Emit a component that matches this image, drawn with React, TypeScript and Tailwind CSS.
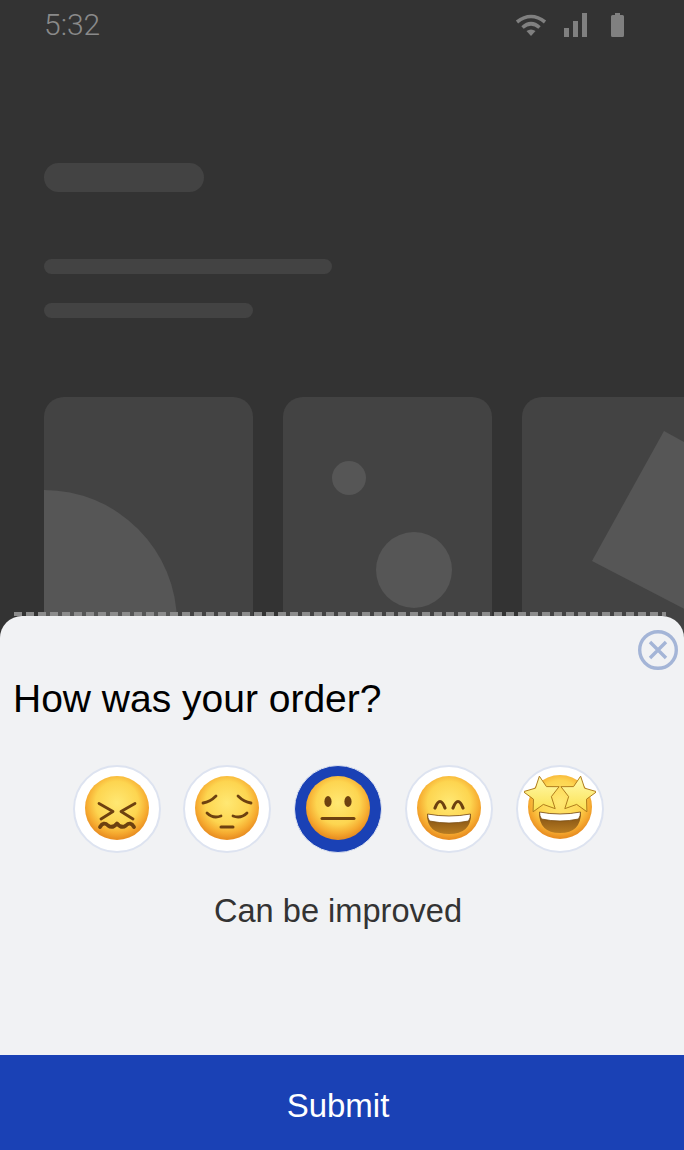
import React from "react";

const starPoints = (cx: number, cy: number, R: number, r: number, rot = 0) => {
  const pts: string[] = [];
  for (let i = 0; i < 10; i++) {
    const a = ((-90 + rot + i * 36) * Math.PI) / 180;
    const rad = i % 2 === 0 ? R : r;
    pts.push(`${(cx + rad * Math.cos(a)).toFixed(2)},${(cy + rad * Math.sin(a)).toFixed(2)}`);
  }
  return pts.join(" ");
};

const Defs = ({ id }: { id: string }) => (
  <defs>
    <radialGradient id={`face-${id}`} cx="50%" cy="42%" r="56%">
      <stop offset="0%" stopColor="#ffe873" />
      <stop offset="60%" stopColor="#fdd550" />
      <stop offset="85%" stopColor="#f6ab30" />
      <stop offset="100%" stopColor="#e98f22" />
    </radialGradient>
    <linearGradient id={`star-${id}`} x1="0" y1="0" x2="0" y2="1">
      <stop offset="0%" stopColor="#fffbb0" />
      <stop offset="100%" stopColor="#fbe04e" />
    </linearGradient>
    <linearGradient id={`mouth-${id}`} x1="0" y1="0" x2="0" y2="1">
      <stop offset="0%" stopColor="#7a4a10" />
      <stop offset="100%" stopColor="#b87c22" />
    </linearGradient>
  </defs>
);

const Brown = "#6d4110";

const Face = ({ id, children }: { id: string; children?: React.ReactNode }) => (
  <svg viewBox="0 0 64 64" className="w-[64px] h-[64px] block -mt-[2px]">
    <Defs id={id} />
    <circle cx="32" cy="32" r="32" fill={`url(#face-${id})`} />
    {children}
  </svg>
);

const Confounded = () => (
  <Face id="a">
    <g fill="none" stroke={Brown} strokeLinecap="round" strokeLinejoin="round">
      <path d="M14 27.5 L28 35.5 L16 43" strokeWidth="2.8" />
      <path d="M50 27.5 L36 35.5 L48 43" strokeWidth="2.8" />
      <path d="M15 51 Q18.5 45 23 49.5 Q27.5 53 32 47.5 Q36.5 53 41 49.5 Q45.5 45 49 51" strokeWidth="3.8" />
    </g>
  </Face>
);

const Pensive = () => (
  <Face id="b">
    <g fill="none" stroke={Brown} strokeWidth="2.8" strokeLinecap="round">
      <path d="M8 27 Q15 26 21 20" />
      <path d="M56 27 Q49 26 43 20" />
      <path d="M12 37 Q18 43 26 40" />
      <path d="M52 37 Q46 43 38 40" />
      <path d="M26 51 L38 51" strokeWidth="3" />
    </g>
  </Face>
);

const Neutral = () => (
  <Face id="c">
    <ellipse cx="22" cy="25.5" rx="3.6" ry="5.4" fill={Brown} />
    <ellipse cx="42" cy="25.5" rx="3.6" ry="5.4" fill={Brown} />
    <path d="M16 42.5 L48 42.5" stroke={Brown} strokeWidth="3" strokeLinecap="round" />
  </Face>
);

const Grin = () => (
  <Face id="d">
    <g fill="none" stroke={Brown} strokeWidth="3.2" strokeLinecap="round">
      <path d="M18 32 Q23 19 28 32" />
      <path d="M36 32 Q41 19 46 32" />
    </g>
    <path d="M10 38 Q32 42 54 38 Q54 58 32 58 Q10 58 10 38 Z" fill="url(#mouth-d)" />
    <path d="M10.5 38 Q32 42 53.5 38 Q53.5 42 51.5 45 Q32 49 12.5 45 Q10.5 42 10.5 38 Z" fill="#ffffff" stroke="#7a4c12" strokeWidth="0.8" />
  </Face>
);

const StarStruck = () => (
  <div className="relative w-[64px] h-[64px]">
    <Face id="e">
      <path d="M11 37 Q32 41 53 37 Q53 58 32 58 Q11 58 11 37 Z" fill="url(#mouth-e)" />
      <path d="M11.5 37 Q32 41 52.5 37 Q52.5 41 50.5 44 Q32 48 13.5 44 Q11.5 41 11.5 37 Z" fill="#ffffff" stroke="#7a4c12" strokeWidth="0.8" />
    </Face>
    <svg viewBox="0 0 72 64" className="absolute -left-[4px] -top-[2px] w-[72px] h-[64px]">
      <Defs id="f" />
      <polygon points={starPoints(18, 20, 19, 9.5, -8)} fill="url(#star-f)" stroke="#b07c1c" strokeWidth="1" strokeLinejoin="round" />
      <polygon points={starPoints(54, 20, 19, 9.5, 8)} fill="url(#star-f)" stroke="#b07c1c" strokeWidth="1" strokeLinejoin="round" />
    </svg>
  </div>
);

const EmojiButton = ({ selected, children }: { selected?: boolean; children: React.ReactNode }) => (
  <div
    className={`w-[88px] h-[88px] rounded-full flex items-center justify-center ${
      selected ? "bg-[#1a41b5] border border-[#dde3f0]" : "bg-white border-2 border-[#dde3f0]"
    }`}
  >
    {children}
  </div>
);

export default function App() {
  return (
    <div
      className="relative w-[684px] h-[1150px] overflow-hidden bg-[#333333]"
      style={{ fontFamily: '"Liberation Sans", Arial, sans-serif' }}
    >
      <div className="flex items-center justify-between h-[50px] pl-[44px] pr-[60px]">
        <span className="text-[30px] leading-[50px] font-light text-[#8a8a8a]" style={{ fontFamily: 'Roboto, sans-serif' }}>
          5:32
        </span>
        <div className="flex items-center">
          <svg width="32" height="24" viewBox="0 0 32 24" className="mr-[17px]" fill="none" stroke="#808080">
            <path d="M2 9 Q16 -2 30 9" strokeWidth="3.6" />
            <path d="M7.5 14.5 Q16 7 24.5 14.5" strokeWidth="3.6" />
            <path d="M11.5 18 L16 23 L20.5 18 Q16 15 11.5 18 Z" fill="#808080" stroke="none" />
          </svg>
          <svg width="23" height="24" viewBox="0 0 23 24" className="mr-[24px]" fill="#808080">
            <rect x="0" y="15" width="5" height="9" />
            <rect x="9" y="8" width="5" height="16" />
            <rect x="18" y="0" width="5" height="24" />
          </svg>
          <svg width="13" height="24" viewBox="0 0 13 24" fill="#808080">
            <path d="M4 0 H9 V2 H11.5 Q13 2 13 3.5 V22.5 Q13 24 11.5 24 H1.5 Q0 24 0 22.5 V3.5 Q0 2 1.5 2 H4 Z" />
          </svg>
        </div>
      </div>

      <div className="flex flex-col pl-[44px] pt-[113px]">
        <div className="w-[160px] h-[29px] rounded-full bg-[#434343]" />
        <div className="w-[288px] h-[15px] rounded-full bg-[#434343] mt-[67px]" />
        <div className="w-[209px] h-[15px] rounded-full bg-[#434343] mt-[29px]" />
        <div className="flex gap-[30px] mt-[79px]">
          <div className="w-[209px] h-[260px] shrink-0 rounded-[20px] bg-[#434343] overflow-hidden">
            <svg width="209" height="260" fill="#565656">
              <circle cx="0" cy="226" r="133" />
            </svg>
          </div>
          <div className="w-[209px] h-[260px] shrink-0 rounded-[20px] bg-[#434343] overflow-hidden">
            <svg width="209" height="260" fill="#565656">
              <circle cx="66" cy="81" r="17" />
              <circle cx="131" cy="173" r="38" />
            </svg>
          </div>
          <div className="w-[209px] h-[260px] shrink-0 rounded-[20px] bg-[#434343] overflow-hidden">
            <svg width="209" height="260" fill="#565656">
              <polygon points="142,34 240,88 170,216 70,164" />
            </svg>
          </div>
        </div>
      </div>

      <div className="absolute left-0 right-0 top-[616px] bottom-0 flex flex-col rounded-t-[22px] bg-[#f1f2f4]">
        <div className="absolute -top-[4px] left-[14px] right-[18px] h-[4px] bg-[repeating-linear-gradient(90deg,#8c8c8c_0,#8c8c8c_8px,transparent_8px,transparent_12px)]" />
        <div className="absolute top-[14px] right-[6px]">
          <svg width="40" height="40" viewBox="0 0 40 40" fill="none" stroke="#a4b5d7" strokeWidth="3.4">
            <circle cx="20" cy="20" r="18.3" />
            <path d="M12 12 L28 28 M28 12 L12 28" />
          </svg>
        </div>
        <h1 className="text-[39px] leading-[44px] text-black font-normal pl-[13px] pt-[61px]">How was your order?</h1>
        <div className="w-[676px] flex justify-center gap-[22.75px] mt-[44px]">
          <EmojiButton><Confounded /></EmojiButton>
          <EmojiButton><Pensive /></EmojiButton>
          <EmojiButton selected><Neutral /></EmojiButton>
          <EmojiButton><Grin /></EmojiButton>
          <EmojiButton><StarStruck /></EmojiButton>
        </div>
        <p className="w-[676px] text-[32.6px] leading-[40px] text-[#333333] text-center mt-[38px]">Can be improved</p>
        <button className="mt-auto h-[95px] w-full bg-[#1a41b5] text-white text-center">
          <span className="block w-[676px] text-[33px] leading-[102px]">Submit</span>
        </button>
      </div>
    </div>
  );
}
